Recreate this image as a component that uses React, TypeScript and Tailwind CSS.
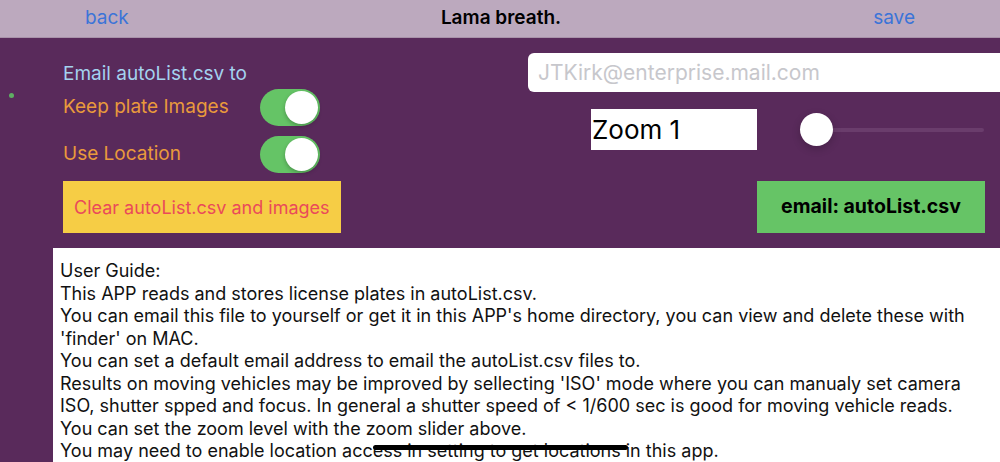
import React from "react";

function Toggle() {
  return (
    <div className="relative w-[60px] h-[37px] rounded-full bg-[#65c466]">
      <div className="absolute right-[2px] top-[2px] w-[33px] h-[33px] rounded-full bg-white shadow-[0_2px_4px_rgba(0,0,0,0.25)]" />
    </div>
  );
}

const guide = [
  "User Guide:",
  "This APP reads and stores license plates in autoList.csv.",
  "You can email this file to yourself or get it in this APP's home directory, you can view and delete these with 'finder' on MAC.",
  "You can set a default email address to email the autoList.csv files to.",
  "Results on moving vehicles may be improved by sellecting 'ISO' mode where you can manualy set camera ISO, shutter spped and focus. In general a shutter speed of < 1/600 sec is good for moving vehicle reads.",
  "You can set the zoom level with the zoom slider above.",
  "You may need to enable location access in setting to get locations in this app.",
];

export default function App() {
  return (
    <div
      className="relative w-[1000px] h-[462px] overflow-hidden bg-[#592a5b]"
      style={{ fontFamily: "Inter, 'Noto Sans', sans-serif" }}
    >
      {/* header */}
      <div className="h-[38px] bg-[#bca9be] flex items-center justify-between pl-[85px] pr-[85px] border-b border-[#a892a9]">
        <span className="text-[19px] text-[#3b74d8]">back</span>
        <span className="text-[19px] font-semibold text-black">Lama breath.</span>
        <span className="text-[19px] text-[#3b74d8]">save</span>
      </div>

      <div className="absolute left-[9px] top-[93px] w-[5px] h-[5px] rounded-full bg-[#5fae63]" />

      {/* controls */}
      <div className="flex h-[210px]">
        <div className="w-[528px] pl-[63px] flex flex-col">
          <div className="mt-[25px] text-[19px] leading-[22px] text-[#a4d2ef]">Email autoList.csv to</div>
          <div className="mt-[4px] flex items-center">
            <span className="w-[197px] text-[19px] text-[#e99a3c]">Keep plate Images</span>
            <Toggle />
          </div>
          <div className="mt-[10px] flex items-center">
            <span className="w-[197px] text-[19px] text-[#e99a3c]">Use Location</span>
            <Toggle />
          </div>
          <div className="mt-[8px] w-[278px] h-[52px] bg-[#f6cd45] flex items-center pl-[11px] text-[18px] whitespace-nowrap text-[#ea4a5a]">
            Clear autoList.csv and images
          </div>
        </div>
        <div className="flex-1 flex flex-col">
          <div className="mt-[15px] h-[39px] bg-white rounded-l-[6px] flex items-center pl-[10px] text-[21px] text-[#c7c7cc]">
            JTKirk@enterprise.mail.com
          </div>
          <div className="mt-[17px] flex items-center">
            <div className="ml-[63px] w-[166px] h-[41px] bg-white flex items-center pl-[1px] text-[26px] text-black">
              Zoom 1
            </div>
            <div className="relative ml-[43px] w-[184px] h-[33px] flex items-center">
              <div className="ml-[16px] h-[4px] flex-1 rounded-full bg-[#6a3d6c]" />
              <div className="absolute left-0 top-0 w-[33px] h-[33px] rounded-full bg-white shadow-[0_3px_8px_rgba(0,0,0,0.2)]" />
            </div>
          </div>
          <div className="mt-[31px] ml-[229px] w-[228px] h-[52px] bg-[#66c466] flex items-center justify-center text-[19.5px] font-bold text-black">
            email: autoList.csv
          </div>
        </div>
      </div>

      {/* guide */}
      <div className="ml-[53px] h-[214px] bg-white pl-[7px] pr-[7px] pt-[12px] text-[18px] leading-[22.5px] text-[#111]">
        {guide.map((l, i) => (
          <div key={i}>{l}</div>
        ))}
      </div>

      <div className="absolute left-[373px] top-[445px] w-[255px] h-[5px] rounded-full bg-black" />
    </div>
  );
}
